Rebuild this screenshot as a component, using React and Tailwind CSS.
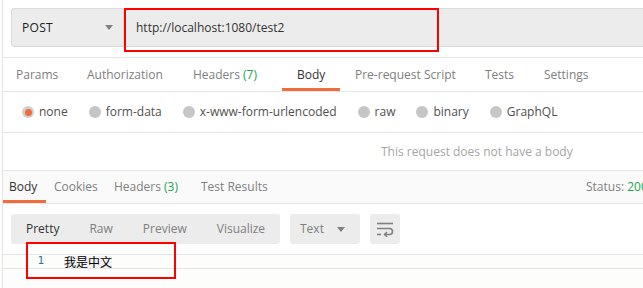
import React from "react";

const font = { fontFamily: '"Open Sans", "Noto Sans CJK SC", sans-serif' };

function Tab({ w, children, active, pl = "pl-[13px]" }) {
  return (
    <div className={`relative h-full flex items-center ${pl} shrink-0`} style={{ width: w }}>
      <span className={active ? "text-[#333]" : "text-[#808080]"}>{children}</span>
      {active && <div className="absolute left-0 bottom-0 h-[3px] w-full bg-[#f26b3a]" />}
    </div>
  );
}

function Radio({ label, selected }) {
  return (
    <div className="flex items-center">
      {selected ? (
        <div className="w-[12px] h-[12px] rounded-full bg-[#cfcfcf] flex items-center justify-center">
          <div className="w-[7px] h-[7px] rounded-full bg-[#f26b3a]" />
        </div>
      ) : (
        <div className="w-[12px] h-[12px] rounded-full bg-[#c6c6c6]" />
      )}
      <span className="ml-[5px] text-[#505050]">{label}</span>
    </div>
  );
}

export default function App() {
  return (
    <div className="relative w-[643px] h-[288px] overflow-hidden bg-white text-[12px]" style={font}>
      <div className="ml-[2px] h-full border-l border-[#e3e3e3] flex flex-col">
        {/* URL bar */}
        <div className="h-[58px] shrink-0 border-b border-[#e6e6e6] pt-[8px] pl-[8px] flex">
          <div className="h-[39px] w-[113px] bg-[#ececec] border border-[#d9d9d9] rounded-l-[3px] flex items-center pl-[10px] pr-[10px] justify-between">
            <span className="text-[#222] font-medium tracking-[0.3px]">POST</span>
            <svg width="8" height="5" viewBox="0 0 8 5"><path d="M0 0 L8 0 L4 5 Z" fill="#808080" /></svg>
          </div>
          <div className="h-[39px] flex-1 bg-[#ececec] border-y border-[#d9d9d9] flex items-center pl-[12px] text-[#333]">
            http://localhost:1080/test2
          </div>
        </div>
        {/* Request tabs */}
        <div className="h-[34px] shrink-0 border-b border-[#e6e6e6] flex">
          <Tab w={71}>Params</Tab>
          <Tab w={106}>Authorization</Tab>
          <Tab w={102}>Headers <span className="text-[#26a150]">(7)</span></Tab>
          <Tab w={58} active pl="pl-[15px]">Body</Tab>
          <Tab w={130} pl="pl-[15px]">Pre-request Script</Tab>
          <Tab w={59} pl="pl-[15px]">Tests</Tab>
          <Tab w={76} pl="pl-[15px]">Settings</Tab>
        </div>
        {/* radio row */}
        <div className="h-[41px] shrink-0 border-b border-[#e6e6e6] flex items-center pl-[19px] gap-[21px]">
          <Radio label="none" selected />
          <Radio label="form-data" />
          <Radio label="x-www-form-urlencoded" />
          <Radio label="raw" />
          <Radio label="binary" />
          <Radio label="GraphQL" />
        </div>
        {/* empty body message */}
        <div className="h-[38px] shrink-0 border-b border-[#e6e6e6] flex items-center pl-[378px] text-[#a6a6a6]">
          This request does not have a body
        </div>
        {/* response tabs */}
        <div className="h-[33px] shrink-0 border-b border-[#e6e6e6] bg-[#fafafa] flex items-center">
          <div className="flex h-full">
            <div className="relative h-full flex items-center pl-[6px] w-[43px]">
              <span className="text-[#333]">Body</span>
              <div className="absolute left-0 bottom-0 h-[3px] w-full bg-[#f26b3a]" />
            </div>
            <div className="h-full flex items-center pl-[8px] w-[59px] text-[#808080]">Cookies</div>
            <div className="h-full flex items-center pl-[9px] w-[87px] text-[#808080]">
              <span>Headers <span className="text-[#26a150]">(3)</span></span>
            </div>
            <div className="h-full flex items-center pl-[9px] text-[#808080]">Test Results</div>
          </div>
          <div className="ml-auto w-[57px] text-[#808080] whitespace-nowrap">
            Status: <span className="text-[#26a150]">200</span>
          </div>
        </div>
        {/* toolbar */}
        <div className="h-[50px] shrink-0 pt-[10px] pl-[8px] flex gap-[10px]">
          <div className="h-[30px] w-[269px] bg-[#ececec] rounded-[3px] flex items-center pl-[15px] text-[#808080]">
            <span className="text-[#333]">Pretty</span>
            <span className="ml-[30px]">Raw</span>
            <span className="ml-[30px]">Preview</span>
            <span className="ml-[30px]">Visualize</span>
          </div>
          <div className="h-[30px] w-[70px] bg-[#ececec] rounded-[3px] flex items-center pl-[10px] text-[#808080]">
            <span>Text</span>
            <svg className="ml-[13px]" width="8" height="5" viewBox="0 0 8 5"><path d="M0 0 L8 0 L4 5 Z" fill="#808080" /></svg>
          </div>
          <div className="h-[30px] w-[30px] bg-[#ececec] rounded-[3px] flex items-center justify-center">
            <svg width="18" height="16" viewBox="0 0 18 16" fill="none" stroke="#808080" strokeWidth="1.6">
              <path d="M1 2.5 H17" />
              <path d="M1 7.5 H13.5 a3 3 0 0 1 0 6 H9" />
              <path d="M11 11.2 L8.6 13.5 L11 15.8" />
              <path d="M1 13.5 H5" />
            </svg>
          </div>
        </div>
        {/* editor */}
        <div className="flex-1 border-t border-[#e6e6e6] bg-[#fdfdfc]">
          <div className="h-[14px] border-b border-[#e6e6e6] flex items-center">
            <span className="w-[41px] text-right text-[#237893] text-[11px]" style={{ fontFamily: '"DejaVu Sans Mono", monospace' }}>1</span>
            <span className="ml-[20px] text-black text-[12px] leading-none bg-[#f2f2f2]" style={{ fontFamily: '"Noto Sans CJK SC", sans-serif' }}>我是中文</span>
          </div>
        </div>
      </div>
      {/* annotation rectangles */}
      <div className="absolute left-[124px] top-[8px] w-[315px] h-[44px] border-2 border-[#ff0000]" />
      <div className="absolute left-[26px] top-[242px] w-[150px] h-[37px] border-2 border-[#ff0000]" />
    </div>
  );
}
